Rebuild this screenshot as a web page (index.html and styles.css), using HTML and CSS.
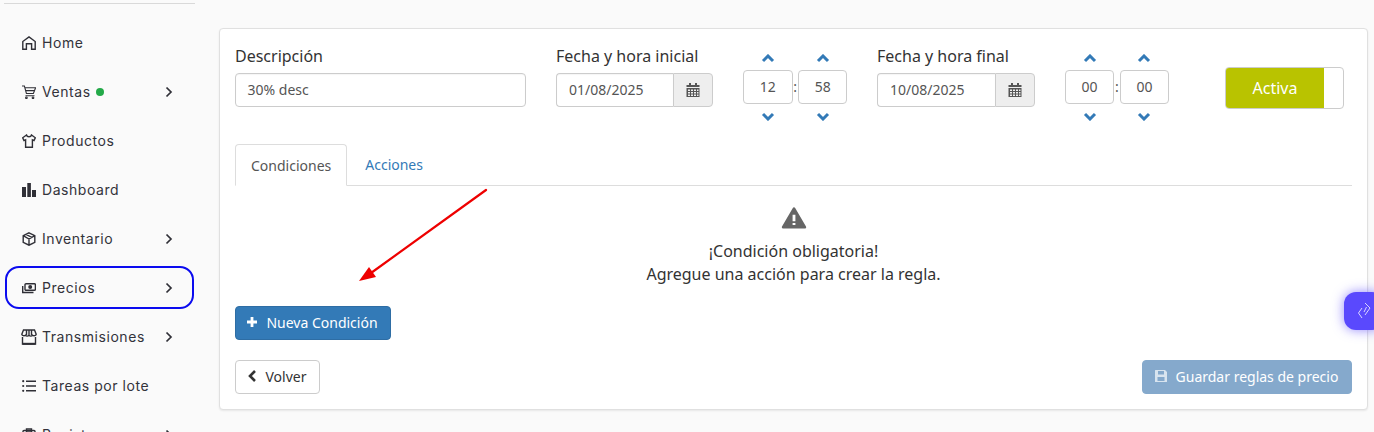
FILE: index.html
```html
<!DOCTYPE html>
<html lang="es">
<head>
<meta charset="utf-8">
<title>Reglas de precio</title>
<link rel="stylesheet" href="styles.css">
</head>
<body>
<div class="app">
  <nav class="sidebar">
    <hr class="rule">
    <ul class="menu">
      <li class="item"><svg class="ico" viewBox="0 0 14 14"><path d="M.8 13.300V5.500L7 .9l6.200 4.600v7.800H9.600V7.800H4.400v5.500z"/></svg><span>Home</span></li>
      <li class="item"><svg class="ico thin" viewBox="0 0 14 14"><path d="M0 1h2.400l2 7.500h7L13.600 2.800H3"/><path d="M4 5.600h8.500M3.500 10.800h9"/><circle cx="4.400" cy="12.800" r=".8"/><circle cx="11" cy="12.800" r=".8"/></svg><span>Ventas</span><i class="dot"></i><svg class="chev" viewBox="0 0 10 12"><path d="M2.500 1.500 7 6l-4.500 4.500"/></svg></li>
      <li class="item"><svg class="ico" viewBox="0 0 14 14"><path d="M4.500 1 .7 3.800 2 6.600l1.600-.7v7.400h6.800V5.900l1.600.7 1.300-2.800L9.500 1C9 3.400 5 3.400 4.500 1z"/></svg><span>Productos</span></li>
      <li class="item"><svg class="ico solid" viewBox="0 0 14 14"><path d="M0 4h4v10H0zM5.300 0h3.600v14H5.300zM10 7h4v7h-4z"/></svg><span>Dashboard</span></li>
      <li class="item"><svg class="ico" viewBox="0 0 14 14"><path d="M7 .8 12.800 3.700v6.600L7 13.200 1.200 10.300V3.700zM1.200 3.700 7 7l5.800-3.300M7 7v6.200M4 2.300 10 5.500"/></svg><span>Inventario</span><svg class="chev" viewBox="0 0 10 12"><path d="M2.500 1.500 7 6l-4.500 4.500"/></svg></li>
      <li class="item current"><svg class="ico" viewBox="0 0 14 14"><rect x="3" y="2.700" width="10.400" height="6.600" rx="1"/><circle class="fill" cx="8.200" cy="6" r="2"/><path d="M.7 5v6.500h10.800"/></svg><span>Precios</span><svg class="chev" viewBox="0 0 10 12"><path d="M2.500 1.500 7 6l-4.500 4.500"/></svg></li>
      <li class="item wide"><svg class="ico big" viewBox="0 0 16 16"><path d="M1.500 8V15h13V8"/><path d="M2.500 1h11l1.700 4.200a2.200 2.200 0 0 1-3.600 1 2.200 2.200 0 0 1-3.600 0 2.200 2.200 0 0 1-3.600 0 2.200 2.200 0 0 1-3.600-1zM5.500 1.500v4.500M8 1.500v4.500M10.500 1.500v4.500"/><path class="thick" d="M1.500 14.800h13"/></svg><span>Transmisiones</span><svg class="chev" viewBox="0 0 10 12"><path d="M2.500 1.500 7 6l-4.500 4.500"/></svg></li>
      <li class="item"><svg class="ico" viewBox="0 0 14 14"><path d="M4 2.200h10M4 7h10M4 11.800h10"/><circle class="fill" cx="1.200" cy="2.200" r="1.100"/><circle class="fill" cx="1.200" cy="7" r="1.100"/><circle class="fill" cx="1.200" cy="11.800" r="1.100"/></svg><span>Tareas por lote</span></li>
      <li class="item"><svg class="ico" viewBox="0 0 14 14"><rect x="1" y="2.500" width="12" height="11" rx="1"/><path d="M4.500 1h5v3h-5z"/></svg><span>Registros</span><svg class="chev" viewBox="0 0 10 12"><path d="M2.500 1.500 7 6l-4.500 4.500"/></svg></li>
    </ul>
  </nav>

  <main class="content">
    <section class="card">
      <div class="fields">
        <div class="field desc">
          <label class="lbl">Descripción</label>
          <div class="input">30% desc</div>
        </div>
        <div class="field date">
          <label class="lbl">Fecha y hora inicial</label>
          <div class="group">
            <div class="input joined">01/08/2025</div>
            <span class="addon"><svg class="cal" viewBox="0 0 14 14"><path d="M3 0h2v2h4V0h2v2h2.500v2H.5V2H3zM.5 5h13v9H.5zM2 6.500v1.500h2V6.500zm3 0v1.500h2V6.500zm3 0v1.500h2V6.500zm3 0v1.500h1.500V6.500zM2 9v1.500h2V9zm3 0v1.500h2V9zm3 0v1.500h2V9zm3 0v1.500h1.500V9zM2 11.500V13h2v-1.500zm3 0V13h2v-1.500zm3 0V13h2v-1.500zm3 0V13h1.500v-1.500z" fill-rule="evenodd"/></svg></span>
          </div>
        </div>
        <div class="time first">
          <div class="spin"><svg class="arrow" viewBox="0 0 14 9"><path d="M2 7l5-5 5 5"/></svg><div class="num">12</div><svg class="arrow" viewBox="0 0 14 9"><path d="M2 2l5 5 5-5"/></svg></div>
          <span class="colon">:</span>
          <div class="spin"><svg class="arrow" viewBox="0 0 14 9"><path d="M2 7l5-5 5 5"/></svg><div class="num">58</div><svg class="arrow" viewBox="0 0 14 9"><path d="M2 2l5 5 5-5"/></svg></div>
        </div>
        <div class="field date end">
          <label class="lbl">Fecha y hora final</label>
          <div class="group">
            <div class="input joined">10/08/2025</div>
            <span class="addon"><svg class="cal" viewBox="0 0 14 14"><path d="M3 0h2v2h4V0h2v2h2.500v2H.5V2H3zM.5 5h13v9H.5zM2 6.500v1.500h2V6.500zm3 0v1.500h2V6.500zm3 0v1.500h2V6.500zm3 0v1.500h1.500V6.500zM2 9v1.500h2V9zm3 0v1.500h2V9zm3 0v1.500h2V9zm3 0v1.500h1.500V9zM2 11.500V13h2v-1.500zm3 0V13h2v-1.500zm3 0V13h2v-1.500zm3 0V13h1.500v-1.500z" fill-rule="evenodd"/></svg></span>
          </div>
        </div>
        <div class="time last">
          <div class="spin"><svg class="arrow" viewBox="0 0 14 9"><path d="M2 7l5-5 5 5"/></svg><div class="num">00</div><svg class="arrow" viewBox="0 0 14 9"><path d="M2 2l5 5 5-5"/></svg></div>
          <span class="colon">:</span>
          <div class="spin"><svg class="arrow" viewBox="0 0 14 9"><path d="M2 7l5-5 5 5"/></svg><div class="num">00</div><svg class="arrow" viewBox="0 0 14 9"><path d="M2 2l5 5 5-5"/></svg></div>
        </div>
        <div class="toggle"><span class="on">Activa</span><span class="off"></span></div>
      </div>

      <div class="tabs">
        <span class="tab active">Condiciones</span>
        <span class="tab">Acciones</span>
      </div>

      <div class="notice">
        <svg class="warn" viewBox="0 0 24 22"><path class="tri" d="M12 2.500 22 19.500H2z"/><path class="mark" d="M12 8v6M12 15.500v2"/></svg>
        <p>¡Condición obligatoria!</p>
        <p>Agregue una acción para crear la regla.</p>
      </div>

      <button class="btn primary" type="button"><svg class="plus" viewBox="0 0 12 12"><path d="M6 1v10M1 6h10"/></svg>Nueva Condición</button>

      <div class="actions">
        <button class="btn back" type="button"><svg class="left" viewBox="0 0 10 14"><path d="M8 2 3 7l5 5"/></svg>Volver</button>
        <button class="btn save" type="button"><svg class="disk" viewBox="0 0 14 14"><path fill-rule="evenodd" d="M1.500 1H11l2 2v9.500a.5.5 0 0 1-.5.5h-11a.5.5 0 0 1-.5-.5V1.500a.5.5 0 0 1 .5-.5zM4 2v3.500h6V2zM3.500 8v4h7V8z"/></svg>Guardar reglas de precio</button>
      </div>
    </section>
  </main>
</div>

<svg class="pointer" viewBox="0 0 140 100"><path d="M129 3 14 86"/><path class="head" d="M2 94 12 80 19 90z"/></svg>
<div class="float-tab"><svg viewBox="0 0 14 16"><path d="M8 1l5 5-5 7M5 6l-3.500 5L5 16M9.500 5 7 10"/></svg></div>
</body>
</html>
```
FILE: styles.css
```css
* { box-sizing: border-box; }
html, body { margin: 0; height: 432px; overflow: hidden; }
body { background: #fafafa; color: #333; font-family: "Noto Sans", "Open Sans", sans-serif; font-size: 14px; position: relative; }
.app { display: flex; align-items: flex-start; }

.sidebar { width: 219px; flex: none; padding: 3px 25px 0 5px; font-family: Inter, sans-serif; }
.rule { border: 0; border-top: 1px solid #d9d9d9; margin: 0 -1px 17px; }
.menu { list-style: none; margin: 0; padding: 0; display: flex; flex-direction: column; gap: 6px; }
.item { height: 43px; display: flex; align-items: center; padding: 0 17px 0 15px; border: 2px solid transparent; border-radius: 14px; letter-spacing: .55px; color: #33333b; font-size: 14px; }
.item.current { border-color: #0b0bef; }
.item.wide { padding-left: 14px; }
.ico { width: 14px; height: 14px; margin-right: 6px; flex: none; fill: none; stroke: #2f2f36; stroke-width: 1.400; }
.ico.thin { stroke-width: 1.100; }
.ico.solid { fill: #2f2f36; stroke: none; }
.ico .fill { fill: #2f2f36; stroke: none; }
.ico.big { width: 16px; height: 16px; margin-right: 5px; }
.ico .thick { stroke-width: 2; }
.dot { width: 8px; height: 8px; border-radius: 50%; background: #23a948; margin-left: 5px; }
.chev { width: 10px; height: 12px; margin-left: auto; margin-right: 1px; fill: none; stroke: #2f2f36; stroke-width: 1.700; }

.content { flex: 1; padding: 28px 6px 0 0; }
.card { height: 382px; background: #fff; border: 1px solid #e0e0e0; border-radius: 4px; padding: 0 15px; box-shadow: 0 1px 2px rgba(0,0,0,.08); }

.fields { display: flex; align-items: flex-start; height: 115px; }
.field { display: flex; flex-direction: column; padding-top: 16px; }
.lbl { font-size: 16px; line-height: 23px; height: 28px; color: #333; }
.desc { width: 291px; margin-right: 30px; }
.date { width: 157px; margin-right: 30px; }
.date.end { width: 158px; }
.input { height: 34px; border: 1px solid #ccc; border-radius: 4px; padding: 0 12px 0 11.500px; line-height: 32px; font-size: 14px; color: #555; background: #fff; box-shadow: inset 0 1px 1px rgba(0,0,0,.04); }
.group { display: flex; }
.joined { flex: 1; border-radius: 4px 0 0 4px; border-right: 0; padding-left: 12px; }
.addon { width: 40px; height: 34px; background: #eee; border: 1px solid #ccc; border-radius: 0 4px 4px 0; display: flex; align-items: center; justify-content: center; }
.cal { width: 14px; height: 14px; fill: #555; }

.time { display: flex; justify-content: space-between; padding-top: 25px; }
.time.first { width: 104.500px; margin-right: 29.500px; }
.time.last { width: 104px; }
.spin { width: 49.500px; display: flex; flex-direction: column; align-items: center; }
.last .spin { width: 49px; }
.arrow { width: 14px; height: 9px; fill: none; stroke: #337ab7; stroke-width: 3; }
.num { width: 100%; height: 34px; margin: 7px 0 8px; border: 1px solid #ccc; border-radius: 4px; text-align: center; line-height: 32px; color: #555; font-size: 14px; }
.colon { padding-top: 16px; line-height: 34px; color: #555; }

.toggle { margin: 38px 8px 0 auto; width: 119px; height: 42px; border: 1px solid #ccc; border-radius: 4px; display: flex; overflow: hidden; background: #fff; }
.on { width: 98px; background: #b9c300; color: #fff; font-size: 16px; line-height: 40px; text-align: center; }

.tabs { display: flex; height: 42px; border-bottom: 1px solid #ddd; }
.tab { height: 42px; padding: 0 15px; line-height: 42px; color: #337ab7; margin-left: 3px; font-size: 14px; }
.tab.active { margin-left: 0; line-height: 41px; background: #fff; color: #555; border: 1px solid #ddd; border-bottom-color: #fff; border-radius: 4px 4px 0 0; }

.notice { height: 120px; text-align: center; padding-top: 20px; font-size: 16px; color: #333; }
.notice p { margin: 0; line-height: 23px; }
.warn { display: block; width: 26px; height: 24px; margin: 0 auto 10px; }
.tri { fill: #666; stroke: #666; stroke-width: 2.500; stroke-linejoin: round; }
.mark { stroke: #fff; stroke-width: 2.600; fill: none; }

.btn { display: inline-flex; align-items: center; justify-content: center; height: 34px; border-radius: 4px; border: 1px solid transparent; padding: 0 2px 2px 0; font: 14px "Noto Sans", "Open Sans", sans-serif; }
.primary { width: 156px; background: #337ab7; border-color: #2e6da4; color: #fff; }
.plus { width: 12px; height: 12px; margin-right: 8px; fill: none; stroke: #fff; stroke-width: 2.800; }
.actions { display: flex; justify-content: space-between; margin-top: 20px; }
.back { width: 85px; background: #fff; border-color: #ccc; color: #333; }
.left { width: 10px; height: 14px; margin-right: 9px; fill: none; stroke: #333; stroke-width: 2.600; }
.save { width: 210px; background: #85a9cc; border-color: #85a9cc; color: #fff; }
.disk { width: 14px; height: 14px; margin-right: 8px; fill: #d8e4ef; }

.pointer { position: absolute; left: 357px; top: 187px; width: 140px; height: 100px; fill: none; stroke: #ee0000; stroke-width: 2.200; stroke-linecap: round; }
.pointer .head { fill: #ee0000; stroke: none; }
.float-tab { position: absolute; left: 1344px; top: 292px; width: 40px; height: 38px; border-radius: 12px; background: #5a49fd; box-shadow: 0 0 12px rgba(91,72,251,.65); padding: 10px 13px; }
.float-tab svg { display: block; width: 14px; height: 16px; fill: none; stroke: #d9d5ff; stroke-width: 1; }
```
